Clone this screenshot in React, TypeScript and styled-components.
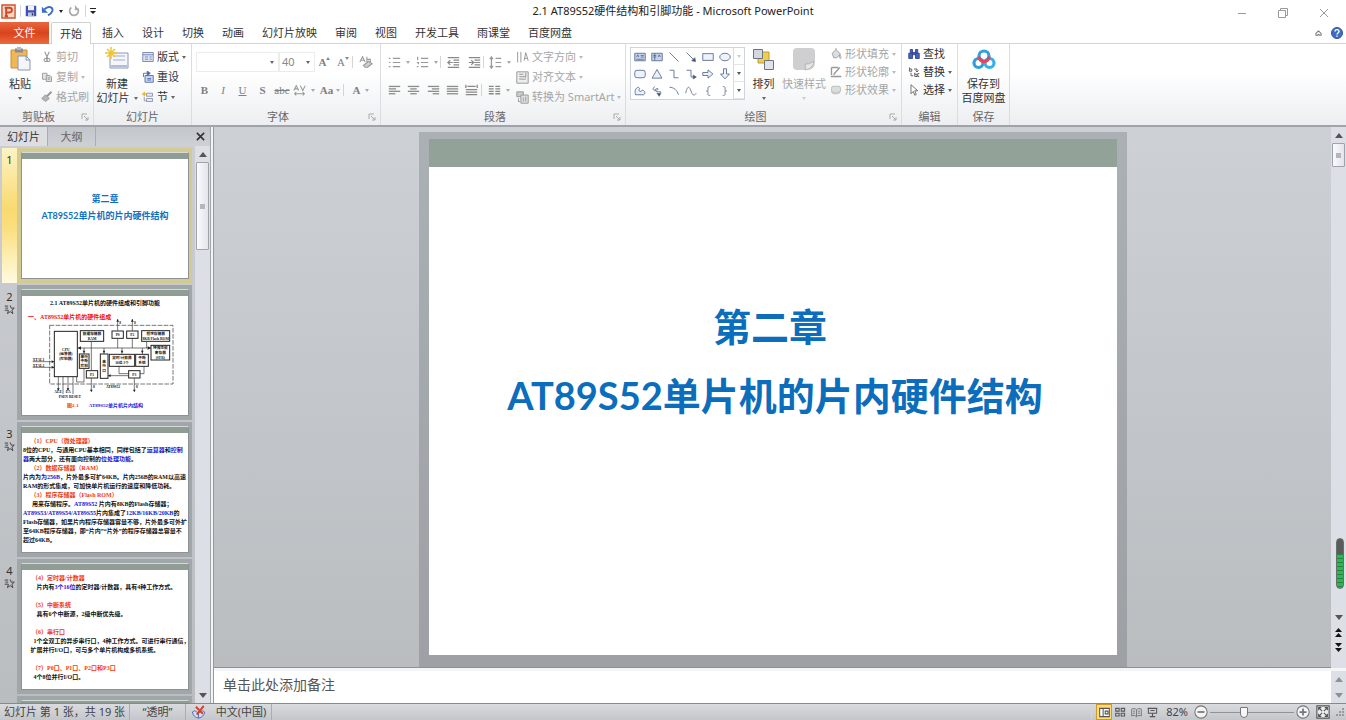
import React from "react";
import styled, { createGlobalStyle, css } from "styled-components";

const UI = `"Noto Sans", "Noto Sans CJK SC", sans-serif`;
const SERIF = `"Liberation Serif", "Noto Sans CJK SC", serif`;

const Global = createGlobalStyle`
  * { box-sizing: border-box; }
  body { margin: 0; overflow: hidden; background: #fff; }
  button, select, input, textarea { font: inherit; color: inherit; margin: 0; padding: 0; border: 0; background: none; }
  svg { display: block; flex: none; }
`;

const Window = styled.div`
  height: 100vh;
  display: flex;
  flex-direction: column;
  font: 11px/14px ${UI};
  color: #333;
  white-space: nowrap;
`;

/* ---------- title bar ---------- */
const TitleBar = styled.header`
  display: grid;
  grid-template-columns: 1fr auto 1fr;
  align-items: center;
  height: 22px;
  flex: none;
`;
const QuickAccess = styled.div`
  display: flex;
  align-items: center;
  gap: 4px;
  padding-left: 1px;
`;
const Title = styled.h1`
  margin: 0;
  font-size: 11px;
  font-weight: 400;
  color: #222;
`;
const WindowButtons = styled.div`
  display: flex;
  justify-content: flex-end;
  padding: 3px 2px 0 0;
`;
const WindowButton = styled.button`
  width: 41px;
  height: 18px;
  display: grid;
  place-items: center;
`;
const Bare = styled.button`
  display: grid;
  place-items: center;
`;
const ThinRule = styled.span`
  width: 1px;
  height: ${(p: { $h?: number }) => p.$h ?? 12}px;
  background: #d5d5d8;
`;

/* ---------- tabs ---------- */
const TabBar = styled.nav`
  display: flex;
  height: 22px;
  flex: none;
  align-items: stretch;
  box-shadow: inset 0 -1px #d3d4d6;
`;
const FileTab = styled.button`
  width: 49px;
  margin-right: 2px;
  color: #fff;
  background: linear-gradient(#e8673f, #d9431d 50%, #ea6a3c);
`;
const Tab = styled.button<{ $active?: boolean }>`
  padding: 0 9px;
  ${(p) =>
    p.$active &&
    css`
      background: #fff;
      border: 1px solid #cfd0d3;
      border-bottom: 0;
      border-radius: 2px 2px 0 0;
      padding: 0 8px;
      margin-right: 2px;
    `}
`;
const TabTools = styled.div`
  margin-left: auto;
  display: flex;
  align-items: center;
  gap: 9px;
  padding-right: 3px;
`;

/* ---------- ribbon ---------- */
const Ribbon = styled.section`
  display: flex;
  height: 83px;
  flex: none;
  background: linear-gradient(#fff 35%, #eceef1);
  border-bottom: 2px solid #a0a3a8;
`;
const GroupBox = styled.div<{ $w: number }>`
  position: relative;
  width: ${(p) => p.$w}px;
  display: flex;
  flex-direction: column;
  border-right: 1px solid #dcdde1;
`;
const GroupBody = styled.div`
  flex: 1;
  display: flex;
  padding: 3px 4px 0;
`;
const GroupName = styled.div<{ $launcher?: boolean }>`
  height: 15px;
  text-align: center;
  color: #666;
  padding-right: ${(p) => (p.$launcher ? 16 : 0)}px;
`;
const Launcher = styled.button`
  position: absolute;
  right: 4px;
  bottom: 4px;
`;
const BigButton = styled.button<{ $w: number; $off?: boolean }>`
  width: ${(p) => p.$w}px;
  height: 57px;
  flex: none;
  display: flex;
  flex-direction: column;
  align-items: center;
  color: ${(p) => (p.$off ? "#a9a9a9" : "#333")};
  line-height: 14px;
  svg:first-child { margin-bottom: 5px; }
  span svg:first-child { margin-bottom: 0; }
`;
const Inline = styled.span`
  display: flex;
  align-items: center;
  gap: 4px;
`;
const Stack = styled.div<{ $row?: number; $gap?: number }>`
  display: flex;
  flex-direction: column;
  margin-left: ${(p) => p.$gap ?? 0}px;
  button { height: ${(p) => p.$row ?? 20}px; }
`;
const TightStack = styled(Stack)`
  margin-top: -2px;
`;
const SmallButton = styled.button<{ $off?: boolean }>`
  display: flex;
  align-items: center;
  gap: 3px;
  color: ${(p) => (p.$off ? "#a6a6a6" : "#333")};
`;
const Rows = styled.div`
  flex: none;
  display: flex;
  flex-direction: column;
  gap: 8px;
  padding-top: 5px;
`;
const Row = styled.div`
  display: flex;
  align-items: center;
  height: 20px;
`;
const Glyph = styled.button<{ $w: number; $gap?: number }>`
  width: ${(p) => p.$w}px;
  height: 20px;
  display: flex;
  align-items: center;
  justify-content: center;
  gap: ${(p) => p.$gap ?? 5}px;
  color: #808080;
  font: 400 11px/20px ${SERIF};
`;
const Mark = styled.svg`
  align-self: flex-start;
  margin-top: 5px;
`;
const Combo = styled.label<{ $w: number }>`
  position: relative;
  width: ${(p) => p.$w}px;
  height: 20px;
  border: 1px solid #ececee;
  color: #888;
  font-size: 11px;
  select { appearance: none; width: 100%; height: 18px; padding-left: 2px; outline: 0; }
  svg { position: absolute; right: 4px; top: 8px; pointer-events: none; }
`;
const Gallery = styled.div`
  display: grid;
  grid-template-columns: repeat(6, 17px) 11px;
  grid-template-rows: repeat(3, 17px);
  height: 53px;
  border: 1px solid #cfd3da;
  background: #fff;
  button { display: grid; place-items: center; }
`;
const GalleryScroll = styled.button`
  border-left: 1px solid #d8dade;
  border-bottom: 1px solid #e4e5e8;
`;

/* ---------- workspace ---------- */
const Workspace = styled.main`
  flex: 1;
  min-height: 0;
  display: flex;
`;
const SidePane = styled.aside`
  width: 210px;
  flex: none;
  display: flex;
  flex-direction: column;
  background: linear-gradient(#ccced3, #b9bdc0);
`;
const PaneTabs = styled.div`
  display: flex;
  height: 19px;
  flex: none;
  background: linear-gradient(#c3c6cb, #cdd0d5);
`;
const PaneTab = styled.button<{ $active?: boolean }>`
  width: 48px;
  color: ${(p) => (p.$active ? "#333" : "#666")};
  background: ${(p) => (p.$active ? "#dcdee2" : "none")};
  border-right: 1px solid #a9adb2;
`;
const PaneClose = styled(Bare)`
  margin-left: auto;
  width: 20px;
`;
const PaneBody = styled.div`
  flex: 1;
  min-height: 0;
  display: flex;
`;
const ThumbList = styled.ol`
  flex: 1;
  min-width: 0;
  margin: 0;
  padding: 2px 3px 0 2px;
  list-style: none;
  overflow: hidden;
  display: flex;
  flex-direction: column;
  gap: 2px;
`;
const ThumbItem = styled.li<{ $active?: boolean }>`
  flex: none;
  display: flex;
  height: 135px;
  background: ${(p) => (p.$active ? "linear-gradient(#fdf3c4, #f9da70 45%, #fbdf80 60%, #fffbe0)" : "none")};
`;
const ThumbNo = styled.div`
  width: 15px;
  flex: none;
  padding-top: 5px;
  display: flex;
  flex-direction: column;
  align-items: center;
`;
const ThumbFrame = styled.div<{ $active?: boolean }>`
  flex: 1;
  min-width: 0;
  padding: 4px 3px 4px 4px;
  background: ${(p) => (p.$active ? "#d3cb92" : "#a1a6a9")};
`;
const ThumbSlide = styled.div`
  height: 127px;
  overflow: hidden;
  background: #fff;
  border: 1px solid #8d9296;
  border-top-color: #d5dad8;
  &::before { content: ""; display: block; height: 6px; background: #8f9d94; }
`;
const ThumbText = styled.div<{ $left: number }>`
  padding: 4px 0 0 ${(p) => p.$left}px;
  font: 700 6px/9px ${SERIF};
  color: #111;
  white-space: pre;
`;
const Red = styled.span`
  color: #f0390f;
`;
const Blue = styled.span`
  color: #1a14d6;
`;
const ThumbTitle = styled.div`
  padding-top: 31px;
  text-align: center;
  color: #0f70c0;
  font: 700 9px/17px Lato, "Noto Sans CJK SC", sans-serif;
`;
const DiagramTitle = styled.div`
  padding-top: 3px;
  text-align: center;
  font: 700 6px/9px ${SERIF};
  color: #111;
`;
const DiagramHead = styled.div`
  padding: 5px 0 0 6px;
  font: 700 6px/9px ${SERIF};
  color: #f01010;
`;
const DiagramSvg = styled.svg`
  margin-top: -3px;
`;
const DiagramCaption = styled.div`
  display: flex;
  justify-content: center;
  gap: 10px;
  padding-top: 1px;
  font: 700 5px/8px ${SERIF};
`;

const ScrollBar = styled.div<{ $w: number }>`
  position: relative;
  width: ${(p) => p.$w}px;
  flex: none;
  display: flex;
  flex-direction: column;
  align-items: center;
  background: #dddfe6;
`;
const ScrollEnd = styled.button<{ $h?: number }>`
  width: 100%;
  height: ${(p) => p.$h ?? 14}px;
  flex: none;
  display: grid;
  place-items: center;
`;
const ScrollThumb = styled.div<{ $h: number }>`
  width: 13px;
  height: ${(p) => p.$h}px;
  border: 1px solid #9fa3ab;
  border-radius: 1px;
  background: linear-gradient(90deg, #fbfbfd, #e2e4ea);
  display: grid;
  place-items: center;
  &::after { content: ""; width: 5px; height: 5px; background: #b3b6bc; }
`;
const Spacer = styled.div`
  flex: 1;
`;
const Splitter = styled.div`
  width: 4px;
  flex: none;
  background: #f3f4f6;
  border-left: 1px solid #a3a7ac;
  border-right: 1px solid #96999e;
`;
const Editor = styled.div`
  flex: 1;
  min-width: 0;
  display: flex;
  flex-direction: column;
`;
const Stage = styled.div`
  flex: 1;
  min-height: 0;
  display: flex;
`;
const Canvas = styled.div`
  flex: 1;
  display: flex;
  justify-content: center;
  align-items: flex-start;
  padding-top: 5px;
  background: linear-gradient(#cdd0d5, #b9bdc0);
`;
const SlideFrame = styled.div`
  padding: 7px 10px 12px;
  background: linear-gradient(#aab0b4, #9da0a4);
`;
const Slide = styled.article`
  height: calc(100vh - 204px);
  aspect-ratio: 4 / 3;
  background: #fff;
  text-align: center;
  color: #0b6dbb;
  font: 700 38px/69px Lato, "Noto Sans CJK SC", sans-serif;
  &::before { content: ""; display: block; height: 28px; background: #93a298; }
`;
const SlideHeading = styled.h2`
  margin: 0;
  padding: 125px 5px 0 0;
  font: inherit;
`;
const SlideLine = styled.p`
  margin: 0;
  padding-left: 5px;
`;
const Recorder = styled.div`
  position: absolute;
  right: 2px;
  bottom: 79px;
  width: 8px;
  height: 51px;
  border: 1px solid #66716b;
  border-radius: 4px;
  background: linear-gradient(#595b5c 15px, transparent 15px), repeating-linear-gradient(#2fb457 0 3px, #23863f 3px 4px);
`;
const NotesBar = styled.div`
  display: flex;
  height: 35px;
  flex: none;
  border-top: 3px solid #f4f5f6;
  box-shadow: inset 0 1px #8d9196, 0 -1px #8d9196;
`;
const Notes = styled.textarea`
  flex: 1;
  resize: none;
  outline: 0;
  background: #fff;
  padding: 5px 9px;
  font: 14px/20px ${SERIF};
  &::placeholder { color: #555; opacity: 1; }
`;

/* ---------- status bar ---------- */
const Status = styled.footer`
  display: flex;
  align-items: center;
  height: 17px;
  flex: none;
  color: #444;
  background: linear-gradient(#d9dbdf, #c3c6ca);
  border-top: 1px solid #85898e;
`;
const StatusItem = styled.button<{ $w: number }>`
  width: ${(p) => p.$w}px;
  height: 16px;
  display: flex;
  align-items: center;
  justify-content: center;
  gap: 10px;
  border-right: 1px solid #a9adb2;
`;
const StatusRight = styled.div`
  margin-left: auto;
  display: flex;
  align-items: center;
  padding-right: 2px;
`;
const ViewButton = styled.button<{ $active?: boolean }>`
  width: 16px;
  height: 16px;
  display: grid;
  place-items: center;
  ${(p) => p.$active && css`background: #fbdc77; border: 1px solid #cf9a2c; margin-left: 4px;`}
`;
const ZoomValue = styled.button`
  width: 34px;
  text-align: center;
`;
const ZoomSlider = styled.input`
  appearance: none;
  width: 84px;
  height: 14px;
  margin: 0 2px;
  background: linear-gradient(#8f9398, #8f9398) center / 100% 1px no-repeat;
  &::-webkit-slider-thumb {
    appearance: none;
    width: 8px;
    height: 11px;
    background: #f6f6f8;
    border: 1px solid #777;
    border-radius: 1px 1px 4px 4px;
  }
`;
const ZoomFit = styled(Bare)`
  width: 26px;
`;

/* ---------- icons ---------- */
type IcoProps = { w?: number; h?: number; vb?: string; c?: string; sw?: number; children: React.ReactNode };
const Ico = ({ w = 13, h, vb = "0 0 16 16", c = "#999", sw = 1.2, children }: IcoProps) => (
  <svg width={w} height={h ?? w} viewBox={vb} fill="none" stroke={c} strokeWidth={sw} aria-hidden>
    {children}
  </svg>
);
const Caret = ({ c = "#666" }: { c?: string }) => (
  <svg width="4" height="3" viewBox="0 0 4 3" aria-hidden><path d="M0 0h4L2 3z" fill={c} /></svg>
);
const SizeMark = ({ up }: { up?: boolean }) => (
  <Mark width="4" height="3" viewBox="0 0 4 3" aria-hidden><path d={up ? "M0 3h4L2 0z" : "M0 0h4L2 3z"} fill="#8a8a8a" /></Mark>
);
const DropSpot = ({ c = "#666" }: { c?: string }) => (
  <Inline><svg width="4" height="12" viewBox="0 0 4 12" aria-hidden><path d="M0 6h4L2 9z" fill={c} /></svg></Inline>
);
const Arrow = ({ up, c = "#555" }: { up?: boolean; c?: string }) => (
  <svg width="8" height="5" viewBox="0 0 8 5" aria-hidden><path d={up ? "M0 5h8L4 0z" : "M0 0h8L4 5z"} fill={c} /></svg>
);
const DoubleArrow = ({ up }: { up?: boolean }) => (
  <svg width="7" height="9" viewBox="0 0 7 9" aria-hidden>
    <path d={up ? "M0 4h7L3.500 0zM0 9h7L3.500 5z" : "M0 0h7L3.500 4zM0 5h7L3.500 9z"} fill="#111" />
  </svg>
);
const lines = (xs: number[][], c = "#8c8c8c") => (
  <Ico w={13} c={c} sw={1.6}>{xs.map(([a, b], i) => <path key={i} d={`M${a} ${3 + i * 3}H${b}`} />)}</Ico>
);

const shapes: React.ReactNode[] = [
  <><path d="M1 3h14v10H1z" fill="#c5d3ea" /><path d="M3.500 8l1.500-3 1.500 3M9 6h4M9 8h4M3 11h10" /></>,
  <><path d="M1 3h14v10H1z" fill="#c5d3ea" /><path d="M9.500 8l1.500-3 1.500 3M3 6h4M3 8h4M5 3v10" /></>,
  <path d="M2 2l12 12" />,
  <><path d="M2 2l11 11" /><path d="M14 14l-5-1 4-4z" fill="#445" /></>,
  <path d="M1 3.500h14v9H1z" fill="#eef3fb" />,
  <ellipse cx="8" cy="8" rx="7" ry="5" fill="#eef3fb" />,
  <rect x="1" y="3" width="14" height="10" rx="3" fill="#eef3fb" />,
  <path d="M8 2l6.500 11.500h-13z" fill="#eef3fb" />,
  <path d="M2 3h6v10h6" />,
  <><path d="M2 3h6v9h4" /><path d="M15 12l-4-2.500v5z" fill="#445" /></>,
  <path d="M1 6h7V2.500L14.500 8 8 13.500V10H1z" fill="#eef3fb" />,
  <path d="M6 1h4v7h4l-6 6.500L2 8h4z" fill="#eef3fb" />,
  <path d="M6 3C1 4 1 9 2 13h11c3-2 1-6-2-6 0 0-3 3-4 1s2-3-1-5z" fill="#eef3fb" />,
  <><path d="M5 2c-4 3-2 6 2 5s3-3 0-2-1 5 3 4 4 1 1 3" /><path d="M8 11l3 4 2-4z" fill="#445" /></>,
  <path d="M2 3c6 0 10 4 12 10" />,
  <path d="M1 11C3 0 6 2 8 8s4 7 7 3" />,
  <path d="M11 2C7 2 8 4 8 6s-1 2-2 2c1 0 2 0 2 2s-1 4 3 4" />,
  <path d="M5 2c4 0 3 2 3 4s1 2 2 2c-1 0-2 0-2 2s1 4-3 4" />,
];

const tabs = ["插入", "设计", "切换", "动画", "幻灯片放映", "审阅", "视图", "开发工具", "雨课堂", "百度网盘"];

const LauncherIcon = () => (
  <Ico w={8} vb="0 0 8 8" c="#aaa" sw={1}><path d="M1 6V1h5M3 3l4 4M7 4v3H4" /></Ico>
);

type GroupProps = { w: number; name: string; launcher?: boolean; children: React.ReactNode };
const Group = ({ w, name, launcher, children }: GroupProps) => (
  <GroupBox $w={w}>
    <GroupBody>{children}</GroupBody>
    <GroupName $launcher={launcher}>{name}</GroupName>
    {launcher && <Launcher aria-label={`${name}选项`}><LauncherIcon /></Launcher>}
  </GroupBox>
);

const Star = () => (
  <Ico w={11} c="#444" sw={1.4}><path d="M1 3h5M2 6h4M1 9h5M9 2l1.500 4H15l-3.500 3 1.500 5-4-3-4 3 1.500-5" /></Ico>
);

const Block = ({ x, y, w, h, t }: { x: number; y: number; w: number; h: number; t: string[] }) => (
  <g>
    <rect x={x} y={y} width={w} height={h} fill="#fff" stroke="#222" strokeWidth="3" />
    {t.map((s, i) => (
      <text key={i} x={x + w / 2} y={y + h / 2 + 4 + (i - (t.length - 1) / 2) * 14} textAnchor="middle">{s}</text>
    ))}
  </g>
);

const Diagram = () => (
  <DiagramSvg width="166" height="82" viewBox="66 100 498 246" fill="none" stroke="#333" strokeWidth="2" aria-label="AT89S52片内结构">
    <path d="M149 119h370v176H149z" strokeDasharray="14 4" />
    <path d="M233 187h220M353 100v35M397 100v35M353 158v29M397 158v29M274 168v86M252 187v18M312 187v18M366 187v18M427 187v18M440 168v19M98 228h65M98 245h65M175 273v40M189 273v52M204 273v40M219 273v52M230 273v16h22v-42M274 278v38M403 278v38M324 270h62M357 242v22h29M432 242v22h-12" />
    <path d="M353 100l-4 8h8zM397 100l-4 8h8zM233 187l10-5v10zM453 187l-10-5v10zM163 228l-8-4v8zM163 245l-8-4v8zM274 320l-4-8h8zM403 320l-4-8h8zM175 316l-4-8h8zM204 316l-4-8h8zM324 270l8-4v8zM252 203l-4-8h8zM312 203l-4-8h8zM366 203l-4-8h8zM427 203l-4-8h8z" fill="#222" stroke="none" />
    <g fill="#111" stroke="none" fontFamily={SERIF} fontWeight="700" fontSize="11">
      <Block x={163} y={137} w={69} h={136} t={["CPU", "(运算器)", "(控制器)"]} />
      <Block x={241} y={135} w={70} h={32} t={["数据存储器", "RAM"]} />
      <Block x={336} y={136} w={34} h={22} t={["P0"]} />
      <Block x={380} y={136} w={34} h={22} t={["P2"]} />
      <Block x={425} y={135} w={84} h={32} t={["程序存储器", "8KB Flash ROM"]} />
      <Block x={453} y={179} w={56} h={44} t={["特殊功能", "寄存器", "(SFR)"]} />
      <Block x={238} y={205} w={29} h={43} t={["串行", "中断", "控制"]} />
      <Block x={301} y={205} w={23} h={73} t={["串", "行", "口"]} />
      <Block x={328} y={206} w={76} h={36} t={["定时/计数器", "16位 3个"]} />
      <Block x={407} y={206} w={38} h={36} t={["中断", "系统"]} />
      <Block x={259} y={255} w={34} h={22} t={["P1"]} />
      <Block x={386} y={255} w={34} h={22} t={["P3"]} />
      <text x="98" y="226">XTAL1</text>
      <text x="98" y="243">XTAL2</text>
      <text x="163" y="322">ALE</text>
      <text x="197" y="322">EA</text>
      <text x="176" y="338">PSEN RESET</text>
      <text x="318" y="307">AT89S52</text>
      <text x="358" y="115">8</text>
      <text x="402" y="115">8</text>
      <text x="279" y="308">8</text>
      <text x="408" y="308">8</text>
    </g>
  </DiagramSvg>
);

const Thumb = ({ n, active, children }: { n?: number; active?: boolean; children?: React.ReactNode }) => (
  <ThumbItem $active={active}>
    <ThumbNo>{n}{n && !active && <Star />}</ThumbNo>
    <ThumbFrame $active={active}><ThumbSlide>{children}</ThumbSlide></ThumbFrame>
  </ThumbItem>
);

export default function App() {
  return (
    <Window>
      <Global />
      <TitleBar>
        <QuickAccess>
          <svg width="15" height="15" viewBox="0 0 16 16">
            <path d="M1 1h14v14H1z" fill="#f6d8cb" stroke="#d4532b" strokeWidth="1.500" />
            <path d="M5.500 13V4H9c3.500 0 3.500 5 0 5H5.500M4 13h3.500M4 4h2" fill="none" stroke="#d2451e" strokeWidth="2" />
          </svg>
          <ThinRule />
          <Bare aria-label="保存">
            <svg width="12" height="12" viewBox="0 0 16 16">
              <path d="M1 1h14v14H1z" fill="#3f51b5" /><path d="M4 1h8v6H4z" fill="#eef2fb" /><path d="M4 10h8v5H4z" fill="#b9c6e8" /><path d="M9 11h2v3H9z" fill="#334" />
            </svg>
          </Bare>
          <Bare aria-label="撤消">
            <Ico w={14} c="#3b6cc7" sw={2.2}><path d="M4 6c5-5 10-2 9 2-1 3-3 4-5 5" /><path d="M1 3v7h7z" fill="#3b6cc7" stroke="none" /></Ico>
          </Bare>
          <Caret c="#222" />
          <Bare aria-label="重复">
            <Ico w={14} c="#a9abae" sw={2}><path d="M5 4a5 5 0 1 0 7 1" /><path d="M9 1v6h5z" fill="#a9abae" stroke="none" /></Ico>
          </Bare>
          <ThinRule />
          <Bare aria-label="自定义快速访问工具栏">
            <svg width="6" height="7" viewBox="0 0 6 7"><path d="M0 0h6v1H0zM0 3h6L3 6z" fill="#222" /></svg>
          </Bare>
        </QuickAccess>
        <Title>2.1 AT89S52硬件结构和引脚功能 - Microsoft PowerPoint</Title>
        <WindowButtons>
          <WindowButton aria-label="最小化"><Ico w={10} vb="0 0 10 10" sw={1}><path d="M1 5.500h8" /></Ico></WindowButton>
          <WindowButton aria-label="还原"><Ico w={10} vb="0 0 10 10" sw={1}><path d="M.5 2.500h7v7h-7zM2.500 2.500v-2h7v7h-2" /></Ico></WindowButton>
          <WindowButton aria-label="关闭"><Ico w={10} vb="0 0 10 10" sw={1}><path d="M1 1l8 8M9 1l-8 8" /></Ico></WindowButton>
        </WindowButtons>
      </TitleBar>

      <TabBar>
        <FileTab>文件</FileTab>
        <Tab $active>开始</Tab>
        {tabs.map((t) => <Tab key={t}>{t}</Tab>)}
        <TabTools>
          <Bare aria-label="折叠功能区"><Ico w={7} h={6} vb="0 0 8 7" c="#777" sw={1.2}><path d="M1 4l3-3 3 3v2H5L4 5 3 6H1z" /></Ico></Bare>
          <Bare aria-label="帮助">
            <svg width="12" height="12" viewBox="0 0 12 12">
              <circle cx="6" cy="6" r="5.500" fill="#3f6dc0" stroke="#2f55a0" />
              <path d="M4 4.500c0-2.500 4-2.500 4 0 0 1.500-2 1.500-2 3M6 8.500v1.300" fill="none" stroke="#fff" strokeWidth="1.400" />
            </svg>
          </Bare>
        </TabTools>
      </TabBar>

      <Ribbon>
        <Group w={94} name="剪贴板" launcher>
          <BigButton $w={32}>
            <svg width="22" height="25" viewBox="0 0 22 25">
              <path d="M2 3h16v18H2z" fill="#efb758" stroke="#c88f36" /><path d="M6 1.500h8v4H6z" fill="#8a8c90" /><path d="M8 0h4v3H8z" fill="#b5b7bb" />
              <path d="M9 9h8l4 4v10H9z" fill="#f3f5fa" stroke="#8c95ab" /><path d="M17 9v4h4" fill="none" stroke="#8c95ab" />
            </svg>
            粘贴
            <DropSpot />
          </BigButton>
          <Stack $gap={5}>
            <SmallButton $off><Ico w={12}><path d="M5 1l4 9M11 1L7 10M6 10a2 2 0 1 0 0 4 2 2 0 0 0 0-4zM10 10a2 2 0 1 0 0 4 2 2 0 0 0 0-4z" strokeWidth="1.500" /></Ico>剪切</SmallButton>
            <SmallButton $off><Ico w={12}><path d="M2 3h6v8H2z" fill="#e6e6e6" /><path d="M7 6h5l2 2v6H7z" fill="#ddd" /><path d="M9 9h3M9 11h3" /></Ico>复制<Caret c="#bbb" /></SmallButton>
            <SmallButton $off><Ico w={12}><path d="M14 1L8 7" strokeWidth="2.500" /><path d="M6 5l5 5-5 4-5-4z" fill="#b5b5b5" /></Ico>格式刷</SmallButton>
          </Stack>
        </Group>

        <Group w={98} name="幻灯片">
          <BigButton $w={38}>
            <svg width="24" height="25" viewBox="0 0 24 25">
              <path d="M5 6h18v15H5z" fill="#f4f6fc" stroke="#8b98bb" /><path d="M6 18h16v2H6z" fill="#b3bdd8" /><path d="M8 9h12M8 13h12" stroke="#a3adc7" />
              <path d="M6 0v12M0 6h12M2 2l8 8M10 2l-8 8" stroke="#f0c531" strokeWidth="1.500" />
            </svg>
            新建
            <Inline>幻灯片<Caret /></Inline>
          </BigButton>
          <Stack $gap={6}>
            <SmallButton><Ico w={12} c="#7484b0"><path d="M1 2h14v12H1z" fill="#dbe3f5" /><path d="M1 5h14M4 8h4M4 11h4M10 8h3M10 11h3" /></Ico>版式<Caret /></SmallButton>
            <SmallButton><Ico w={12} c="#536fae"><path d="M4 6h11v9H4z" fill="#c9d6ef" /><path d="M7 10h5M7 12h5M2 8V3h6" /><path d="M7 0l4 3-4 3z" fill="#3d62b3" /></Ico>重设</SmallButton>
            <SmallButton><Ico w={12} c="#8a94ae"><path d="M6 3h8v4H6zM6 10h8v4H6z" fill="#e6eaf4" /><path d="M3 1v6M0 4h6" stroke="#e8bd30" strokeWidth="2" /><path d="M3 8v5h3" /></Ico>节<Caret /></SmallButton>
          </Stack>
        </Group>

        <Group w={189} name="字体" launcher>
          <Rows>
            <Row>
              <Combo $w={83}><select aria-label="字体" defaultValue=""><option value=""></option></select><Caret /></Combo>
              <Combo $w={36}><select aria-label="字号"><option>40</option></select><Caret /></Combo>
              <Glyph $w={19} $gap={0}><b>A</b><SizeMark up /></Glyph>
              <Glyph $w={18} $gap={0}>A<SizeMark /></Glyph>
              <ThinRule />
              <Glyph $w={26} aria-label="清除格式"><Ico w={14}><path d="M1 8l3-6 3 6M2 6h4M9 2v6h4V5H9" /><path d="M5 12l6-5 4 3-5 4H7z" fill="#ccc" /></Ico></Glyph>
            </Row>
            <Row>
              <Glyph $w={17}><b>B</b></Glyph>
              <Glyph $w={20}><i>I</i></Glyph>
              <Glyph $w={19}><u>U</u></Glyph>
              <Glyph $w={21}><b>S</b></Glyph>
              <Glyph $w={18}><s>abc</s></Glyph>
              <Glyph $w={26} aria-label="字符间距"><Ico w={13} sw={1.3}><path d="M1 8l3-6 3 6M2 6h4M9 2l3 6 3-6M2 12h12M4 10l-2 2 2 2M12 10l2 2-2 2" /></Ico><Caret c="#aaa" /></Glyph>
              <Glyph $w={26} $gap={3}><b>Aa</b><Caret c="#aaa" /></Glyph>
              <ThinRule />
              <Glyph $w={34}><b>A</b><Caret c="#aaa" /></Glyph>
            </Row>
          </Rows>
        </Group>

        <Group w={245} name="段落" launcher>
          <Rows>
            <Row>
              <Glyph $w={28} aria-label="项目符号"><Ico><path d="M1 3h2M1 8h2M1 13h2M6 3h9M6 8h9M6 13h9" strokeWidth="1.500" /></Ico><Caret c="#aaa" /></Glyph>
              <Glyph $w={27} aria-label="编号"><Ico><path d="M2 1v4M1 8h2v2M1 13h2M6 3h9M6 8h9M6 13h9" strokeWidth="1.500" /></Ico><Caret c="#aaa" /></Glyph>
              <ThinRule />
              <Glyph $w={25} aria-label="减少缩进"><Ico c="#888"><path d="M1 2h14M8 5h7M8 8h7M8 11h7M1 14h14M7 8H2M4 5L1 8l3 3" strokeWidth="1.500" /></Ico></Glyph>
              <Glyph $w={17} aria-label="增加缩进"><Ico c="#888"><path d="M1 2h14M8 5h7M8 8h7M8 11h7M1 14h14M1 8h5M4 5l3 3-3 3" strokeWidth="1.500" /></Ico></Glyph>
              <ThinRule />
              <Glyph $w={32} aria-label="行距"><Ico><path d="M3 2v12M1 4l2-3 2 3M1 12l2 3 2-3M8 3h7M8 8h7M8 13h7" strokeWidth="1.500" /></Ico><Caret c="#aaa" /></Glyph>
            </Row>
            <Row>
              <Glyph $w={18} aria-label="左对齐">{lines([[1, 15], [1, 10], [1, 15], [1, 9]])}</Glyph>
              <Glyph $w={20} aria-label="居中">{lines([[1, 15], [4, 12], [1, 15], [4, 12]])}</Glyph>
              <Glyph $w={20} aria-label="右对齐">{lines([[1, 15], [6, 15], [1, 15], [7, 15]])}</Glyph>
              <Glyph $w={18} aria-label="两端对齐">{lines([[1, 15], [1, 15], [1, 15], [1, 15]])}</Glyph>
              <Glyph $w={20} aria-label="分散对齐"><Ico c="#888"><path d="M1 1v4M15 1v4M3 3h10M1 7h14M1 10h14M1 13h14" strokeWidth="1.600" /></Ico></Glyph>
              <ThinRule />
              <Glyph $w={34} aria-label="分栏"><Ico c="#888"><path d="M1 3h6M1 6h6M1 9h6M1 12h6M9 3h6M9 6h6M9 9h6M9 12h6" strokeWidth="1.600" /></Ico><Caret c="#aaa" /></Glyph>
            </Row>
          </Rows>
          <Stack>
            <SmallButton $off><Ico><path d="M2 1v13M6 1v13M10 12l2-10 3 10M10 9h4" /></Ico>文字方向<Caret c="#bbb" /></SmallButton>
            <SmallButton $off><Ico><path d="M1 1h14v14H1z" fill="#ececec" /><path d="M4 4h5M4 7h8M4 10h8M12 2v6" /></Ico>对齐文本<Caret c="#bbb" /></SmallButton>
            <SmallButton $off><Ico><path d="M1 1h8v6H1z" fill="#ccc" /><path d="M6 5h9v10H6z" fill="#e2e2e2" /><path d="M9 8v5M12 7v6M3 9v4h2" /></Ico>转换为 SmartArt<Caret c="#bbb" /></SmallButton>
          </Stack>
        </Group>

        <Group w={276} name="绘图" launcher>
          <Gallery>
            {[0, 1, 2].map((r) => (
              <React.Fragment key={r}>
                {shapes.slice(r * 6, r * 6 + 6).map((s, i) => (
                  <button key={i} aria-label={`形状 ${r * 6 + i + 1}`}><Ico w={12} c="#5f6f94">{s}</Ico></button>
                ))}
                <GalleryScroll aria-label={["上一行", "下一行", "其他"][r]}><Caret c={r ? "#555" : "#ccc"} /></GalleryScroll>
              </React.Fragment>
            ))}
          </Gallery>
          <BigButton $w={37}>
            <svg width="24" height="25" viewBox="0 0 24 25">
              <path d="M6 5h11v11H6z" fill="#f0cd4f" stroke="#c29b2c" /><path d="M1.500 2.500h9v9h-9z" fill="#d3d7de" stroke="#6d7480" /><path d="M12.500 13.500h9v9h-9z" fill="#dfe2e8" stroke="#6d7480" />
            </svg>
            排列
            <DropSpot />
          </BigButton>
          <BigButton $w={44} $off>
            <svg width="24" height="25" viewBox="0 0 24 25"><path d="M5 1h14q4 0 4 4v10q0 8-8 8H5q-4 0-4-4V5q0-4 4-4z" fill="#cfcfd1" /><path d="M13 23q1-5 0-6 4 1 9-3-1 8-9 9z" fill="#e7e7e9" stroke="#b7b7ba" /></svg>
            快速样式
            <DropSpot c="#ccc" />
          </BigButton>
          <TightStack $row={18} $gap={4}>
            <SmallButton $off><Ico w={12}><path d="M3 7l5-5 6 6-5 5H5z" fill="#ddd" /><path d="M8 2V0M13 9c2 3 2 5 1 5s-2-2-1-5z" /></Ico>形状填充<Caret c="#bbb" /></SmallButton>
            <SmallButton $off><Ico w={12}><path d="M2 2h9M2 2v10M13 2L6 10l-1 2M1 14h14" strokeWidth="1.800" /></Ico>形状轮廓<Caret c="#bbb" /></SmallButton>
            <SmallButton $off><Ico w={12} c="#bbb"><path d="M4 3h8q2 0 2 3v3q-1 4-4 4H5q-3 0-3-4V6q0-3 2-3z" fill="#ddd" /><path d="M3 10c3 2 8 2 11-1" /></Ico>形状效果<Caret c="#bbb" /></SmallButton>
          </TightStack>
        </Group>

        <Group w={56} name="编辑">
          <TightStack $row={18} $gap={2}>
            <SmallButton><Ico w={12} c="#33479c"><path d="M3 2h3v5H3zM10 2h3v5h-3zM1 7h5v7H1zM10 7h5v7h-5zM6 6h4v3H6z" fill="#4a5fb2" /></Ico>查找</SmallButton>
            <SmallButton><Ico w={12} c="#555"><path d="M2 2v5h3V4H2M9 9v5h3v-3H9M15 10h-2v4h2M4 9v4h3M8 4h4v3M10 6l2 2 2-2" /></Ico>替换<Caret /></SmallButton>
            <SmallButton><Ico w={12} c="#666"><path d="M4 1v12l3-3 2 5 2-1-2-5h4z" fill="#fff" /></Ico>选择<Caret /></SmallButton>
          </TightStack>
        </Group>

        <Group w={52} name="保存">
          <BigButton $w={43}>
            <svg width="24" height="25" viewBox="0 0 24 25" fill="none" strokeWidth="3.200">
              <circle cx="12" cy="9" r="5" stroke="#2fa3dc" />
              <circle cx="6.500" cy="16" r="4.500" stroke="#2c9fe0" /><circle cx="17.500" cy="16" r="4.500" stroke="#37b0e5" />
              <path d="M7 9.500a5 5 0 0 0 10 0" stroke="#e6455c" />
            </svg>
            <span>保存到</span>
            <span>百度网盘</span>
          </BigButton>
        </Group>
      </Ribbon>

      <Workspace>
        <SidePane>
          <PaneTabs>
            <PaneTab $active>幻灯片</PaneTab>
            <PaneTab>大纲</PaneTab>
            <PaneClose aria-label="关闭窗格"><Ico w={9} vb="0 0 10 10" c="#333" sw={1.8}><path d="M1 1l8 8M9 1l-8 8" /></Ico></PaneClose>
          </PaneTabs>
          <PaneBody>
            <ThumbList>
              <Thumb n={1} active>
                <ThumbTitle>第二章<br />AT89S52单片机的片内硬件结构</ThumbTitle>
              </Thumb>
              <Thumb n={2}>
                <DiagramTitle>2.1 AT89S52单片机的硬件组成和引脚功能</DiagramTitle>
                <DiagramHead>一、AT89S52单片机的硬件组成</DiagramHead>
                <Diagram />
                <DiagramCaption><Red>图2-1</Red><Blue>AT89S52单片机片内结构</Blue></DiagramCaption>
              </Thumb>
              <Thumb n={3}>
                <ThumbText $left={1}>
                  <Red>{"     （1）CPU（微处理器）"}</Red>{"\n8位的CPU，与通用CPU基本相同，同样包括了"}<Blue>运算器</Blue>和<Blue>{"控制\n器"}</Blue>两大部分，还有面向控制的<Blue>位处理功能</Blue>{"。\n"}
                  <Red>{"     （2）数据存储器（RAM）"}</Red>{"\n片内为"}<Blue>为256B</Blue>{"，片外最多可扩64KB。片内256B的RAM以高速\nRAM的形式集成，可加快单片机运行的速度和降低功耗。\n"}
                  <Red>{"     （3）程序存储器（Flash ROM）"}</Red>{"\n      用来存储程序。"}<Blue>AT89S52</Blue>{" 片内有8KB的Flash存储器；\n"}
                  <Blue>AT89S53/AT89S54/AT89S55</Blue>片内集成了<Blue>12KB/16KB/20KB</Blue>{"的\nFlash存储器，如果片内程序存储器容量不够，片外最多可外扩\n至64KB程序存储器，即“片内”“片外”的程序存储器总容量不\n超过64KB。"}
                </ThumbText>
              </Thumb>
              <Thumb n={4}>
                <ThumbText $left={4}>
                  <Red>{"    （4）定时器/计数器"}</Red>{"\n       片内有"}<Blue>3个16位</Blue>{"的定时器/计数器，具有4种工作方式。\n\n"}
                  <Red>{"    （5）中断系统"}</Red>{"\n       具有6个中断源，2级中断优先级。\n\n"}
                  <Red>{"    （6）串行口"}</Red>{"\n     1个全双工的异步串行口，4种工作方式。可进行串行通信，\n   扩展并行I/O口，可与多个单片机构成多机系统。\n\n"}
                  <Red>{"    （7）P0口、P1口、P2口和P3口"}</Red>{"\n     4个8位并行I/O口。"}
                </ThumbText>
              </Thumb>
              <Thumb />
            </ThumbList>
            <ScrollBar $w={15}>
              <ScrollEnd aria-label="向上滚动" $h={16}><Arrow up /></ScrollEnd>
              <ScrollThumb $h={88} />
              <Spacer />
              <ScrollEnd aria-label="向下滚动" $h={16}><Arrow /></ScrollEnd>
            </ScrollBar>
          </PaneBody>
        </SidePane>
        <Splitter />
        <Editor>
          <Stage>
            <Canvas>
              <SlideFrame>
                <Slide>
                  <SlideHeading>第二章</SlideHeading>
                  <SlideLine>AT89S52单片机的片内硬件结构</SlideLine>
                </Slide>
              </SlideFrame>
            </Canvas>
            <ScrollBar $w={15}>
              <ScrollEnd aria-label="向上滚动" $h={16}><Arrow up /></ScrollEnd>
              <ScrollThumb $h={24} />
              <Spacer />
              <ScrollEnd aria-label="向下滚动"><Arrow /></ScrollEnd>
              <ScrollEnd aria-label="上一张幻灯片" $h={16}><DoubleArrow up /></ScrollEnd>
              <ScrollEnd aria-label="下一张幻灯片"><DoubleArrow /></ScrollEnd>
              <ScrollEnd as="span" />
              <Recorder />
            </ScrollBar>
          </Stage>
          <NotesBar>
            <Notes aria-label="备注" placeholder="单击此处添加备注" />
            <ScrollBar $w={15}>
              <ScrollEnd aria-label="备注向上" $h={16}><Arrow up c="#8e9197" /></ScrollEnd>
              <Spacer />
              <ScrollEnd aria-label="备注向下" $h={16}><Arrow c="#8e9197" /></ScrollEnd>
            </ScrollBar>
          </NotesBar>
        </Editor>
      </Workspace>

      <Status>
        <StatusItem $w={130}>幻灯片 第 1 张，共 19 张</StatusItem>
        <StatusItem $w={56}>“透明”</StatusItem>
        <StatusItem $w={86}>
          <svg width="15" height="14" viewBox="0 0 16 16">
            <path d="M1 8q3-3 5 0l2 1 2-1q3-3 5 0-1 6-7 7-6-1-7-7z" fill="#cfdcf4" stroke="#4a64a8" /><path d="M8 9v6" stroke="#4a64a8" />
            <path d="M5 2l8 8M14 1L6 11" stroke="#d9402b" strokeWidth="2.200" />
          </svg>
          中文(中国)
        </StatusItem>
        <StatusRight>
          <ThinRule $h={14} />
          <ViewButton $active aria-label="普通视图"><Ico w={11} c="#555" sw={1.5}><path d="M1 2h14v12H1zM6 2v12M9 6h4v4H9z" fill="#fff" /></Ico></ViewButton>
          <ViewButton aria-label="幻灯片浏览"><Ico w={11} c="#555" sw={1.5}><path d="M1 2h5v4H1zM9 2h5v4H9zM1 9h5v4H1zM9 9h5v4H9z" /></Ico></ViewButton>
          <ViewButton aria-label="阅读视图"><Ico w={11} c="#777" sw={1.4}><path d="M8 4C6 2 3 2 1 3v10c2-1 5-1 7 1 2-2 5-2 7-1V3c-2-1-5-1-7 1zv10M3 6h3M3 9h3M10 6h3M10 9h3" /></Ico></ViewButton>
          <ViewButton aria-label="幻灯片放映"><Ico w={11} c="#555" sw={1.5}><path d="M1 2h14M2 2v7h12V2M8 9v5M4 14h8M5 5h6" /></Ico></ViewButton>
          <ZoomValue>82%</ZoomValue>
          <Bare aria-label="缩小"><Ico w={14} c="#777" sw={1.2}><circle cx="8" cy="8" r="7" fill="#f4f4f6" /><path d="M4 8h8" strokeWidth="2" /></Ico></Bare>
          <ZoomSlider type="range" aria-label="显示比例" min={0} max={100} defaultValue={40} />
          <Bare aria-label="放大"><Ico w={14} c="#777" sw={1.2}><circle cx="8" cy="8" r="7" fill="#f4f4f6" /><path d="M4 8h8M8 4v8" strokeWidth="2" /></Ico></Bare>
          <ZoomFit aria-label="适应窗口"><Ico w={14} c="#555" sw={1.3}><path d="M1 1h14v14H1z" fill="#eee" /><path d="M3 6V3h3M10 3h3v3M13 10v3h-3M6 13H3v-3M3 3l4 4M13 3L9 7M13 13L9 9M3 13l4-4" /></Ico></ZoomFit>
          <Ico w={8} vb="0 0 8 8" c="#999" sw={2}><path d="M6 1h2M6 4h2M3 4h2M6 7h2M3 7h2M0 7h2" /></Ico>
        </StatusRight>
      </Status>
    </Window>
  );
}
